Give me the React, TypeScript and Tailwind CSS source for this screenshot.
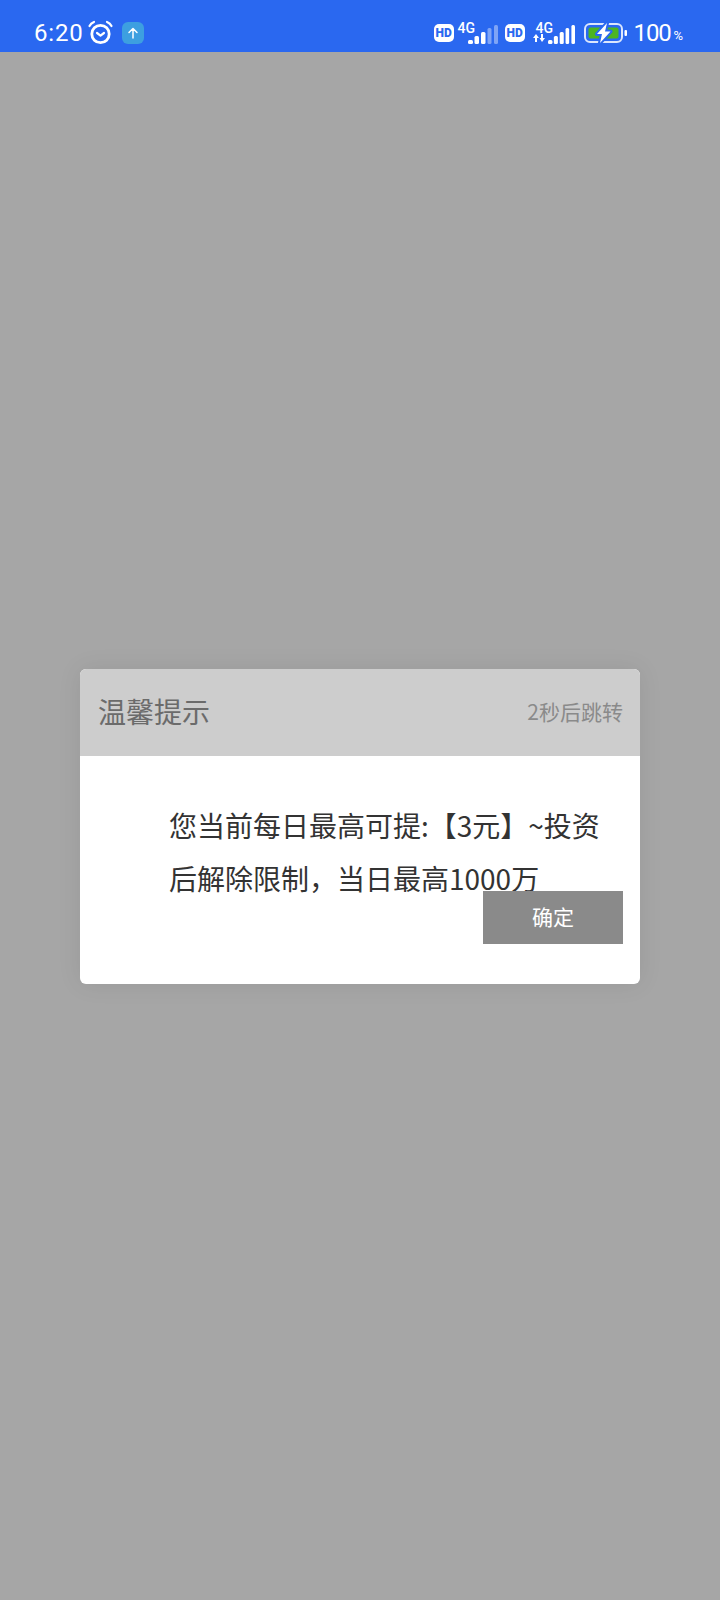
/** Transfer limit notice dialog over a dimmed page, with the phone status bar on top */

const cjk = { fontFamily: '"Noto Sans CJK SC", sans-serif' };

function AlarmIcon() {
  return (
    <svg width="25" height="25" viewBox="0 0 25 25" fill="none" stroke="white" strokeLinecap="round" aria-hidden="true">
      <circle cx="12.500" cy="14" r="8.700" strokeWidth="2.800" />
      <path d="M9 13l3.500 2.600L16 13" strokeWidth="2.200" strokeLinejoin="round" />
      <path d="M1.500 6C2.500 4 4 2.800 6 2M23.500 6C22.500 4 21 2.800 19 2" strokeWidth="2.200" />
    </svg>
  );
}

function HdBadge() {
  return (
    <span className="flex h-[18px] w-[20px] items-center justify-center rounded-[5px] bg-white text-[12px] font-black text-[#2a68f0] font-['Roboto',sans-serif] leading-none">
      HD
    </span>
  );
}

function SignalBars({ full }: { full: boolean }) {
  const bars = [
    { x: 0, w: 5, h: 4 },
    { x: 6.500, w: 4.500, h: 8 },
    { x: 13, w: 4.500, h: 12 },
    { x: 19.500, w: 4, h: 16 },
    { x: 26, w: 4, h: 19 },
  ];
  return (
    <svg width={full ? 27 : 30} height="19" viewBox="0 0 30 19" preserveAspectRatio="none" aria-hidden="true">
      {bars.map((bar, i) => (
        <rect
          key={bar.x}
          x={bar.x}
          y={19 - bar.h}
          width={bar.w}
          height={bar.h}
          rx="1.500"
          fill="white"
          opacity={!full && i > 2 ? 0.4 : 1}
        />
      ))}
    </svg>
  );
}

function Network({ arrows, full }: { arrows: boolean; full: boolean }) {
  return (
    <div className={`relative h-[21px] ${arrows ? 'w-[42px]' : 'w-[40px]'}`}>
      <span className={`absolute -top-[1px] text-[14px] font-medium leading-[12px] text-white font-['Roboto',sans-serif] ${arrows ? 'left-[3px]' : 'left-0'}`}>
        4G
      </span>
      <div className="absolute bottom-0 right-0 flex">
        <SignalBars full={full} />
      </div>
      {arrows && (
        <svg className="absolute bottom-[2px] left-0" width="12" height="8" viewBox="0 0 12 8" fill="white" aria-hidden="true">
          <path d="M3 0L6 4H4v4H2V4H0zM9 8L6.500 4H8V0h2v4h2z" />
        </svg>
      )}
    </div>
  );
}

const boltPath = 'M23 0L13 11h5l-2 9L26.500 8.500H21z';

function BatteryIcon() {
  return (
    <svg width="43" height="24" viewBox="0 -2 43 24" fill="none" aria-hidden="true">
      <rect x="1" y="1" width="37" height="18" rx="5" stroke="#dbe6fd" strokeWidth="2" />
      <rect x="4.500" y="4.500" width="30" height="11" rx="2" fill="#4cb520" />
      <rect x="40.500" y="7" width="2.500" height="6" rx="1" fill="white" />
      <path d={boltPath} stroke="#2a68f0" strokeWidth="4" strokeLinejoin="round" />
      <path d={boltPath} fill="white" />
    </svg>
  );
}

function StatusBar() {
  return (
    <div className="flex h-[52px] shrink-0 items-center justify-between bg-[#2a68f0] pl-[34px] pr-[37px] pt-[14px] text-white font-['Roboto',sans-serif]">
      <div className="flex items-center">
        <span className="text-[24px] font-[450] leading-none tracking-[0.8px]">6:20</span>
        <span className="ml-[5px] -mt-[1px] flex">
          <AlarmIcon />
        </span>
        <span className="ml-[9px] flex h-[22px] w-[22px] items-center justify-center rounded-[6px] bg-[#3d9fe0]">
          <svg width="12" height="12" viewBox="0 0 12 12" fill="none" stroke="white" strokeWidth="1.500" strokeLinecap="round" strokeLinejoin="round" aria-hidden="true">
            <path d="M6 11V1.500M2 5.500l4-4 4 4" />
          </svg>
        </span>
      </div>
      <div className="flex items-center">
        <HdBadge />
        <span className="ml-[4px] flex">
          <Network arrows={false} full={false} />
        </span>
        <span className="ml-[7px]">
          <HdBadge />
        </span>
        <span className="ml-[8px] flex">
          <Network arrows full />
        </span>
        <span className="ml-[9px] flex">
          <BatteryIcon />
        </span>
        <span className="ml-[7px] text-[24px] font-[450] leading-none tracking-[-1.200px]">100</span>
        <span className="ml-[3px] mt-[5px] text-[13px] font-[450] leading-none">%</span>
      </div>
    </div>
  );
}

function NoticeDialog() {
  return (
    <div className="w-[560px] overflow-hidden rounded-[6px] bg-white shadow-[0_0_24px_rgba(0,0,0,0.08)]" style={cjk}>
      <div className="flex h-[87px] items-center justify-between bg-[#cdcdcd] pl-[18px] pr-[17px]">
        <h2 className="pb-[2px] text-[28px] font-normal text-[#6b6b6b]">温馨提示</h2>
        <span className="text-[21px] text-[#8a8a8a]">2秒后跳转</span>
      </div>
      <div className="pb-[40px] pl-[18px] pr-[17px] pt-[43px]">
        <p className="ml-[71px] w-[436px] text-[28px] leading-[53px] text-[#333333]">
          您当前每日最高可提:【3元】~投资后解除限制，当日最高1000万
        </p>
        <div className="-mt-[14px] flex justify-end">
          <button className="h-[53px] w-[140px] bg-[#8a8a8a] text-[21px] text-white">确定</button>
        </div>
      </div>
    </div>
  );
}

export default function App() {
  return (
    <div className="flex h-[1600px] w-[720px] flex-col bg-[#a6a6a6]">
      <StatusBar />
      <div className="flex flex-1 items-center justify-center">
        <NoticeDialog />
      </div>
    </div>
  );
}
